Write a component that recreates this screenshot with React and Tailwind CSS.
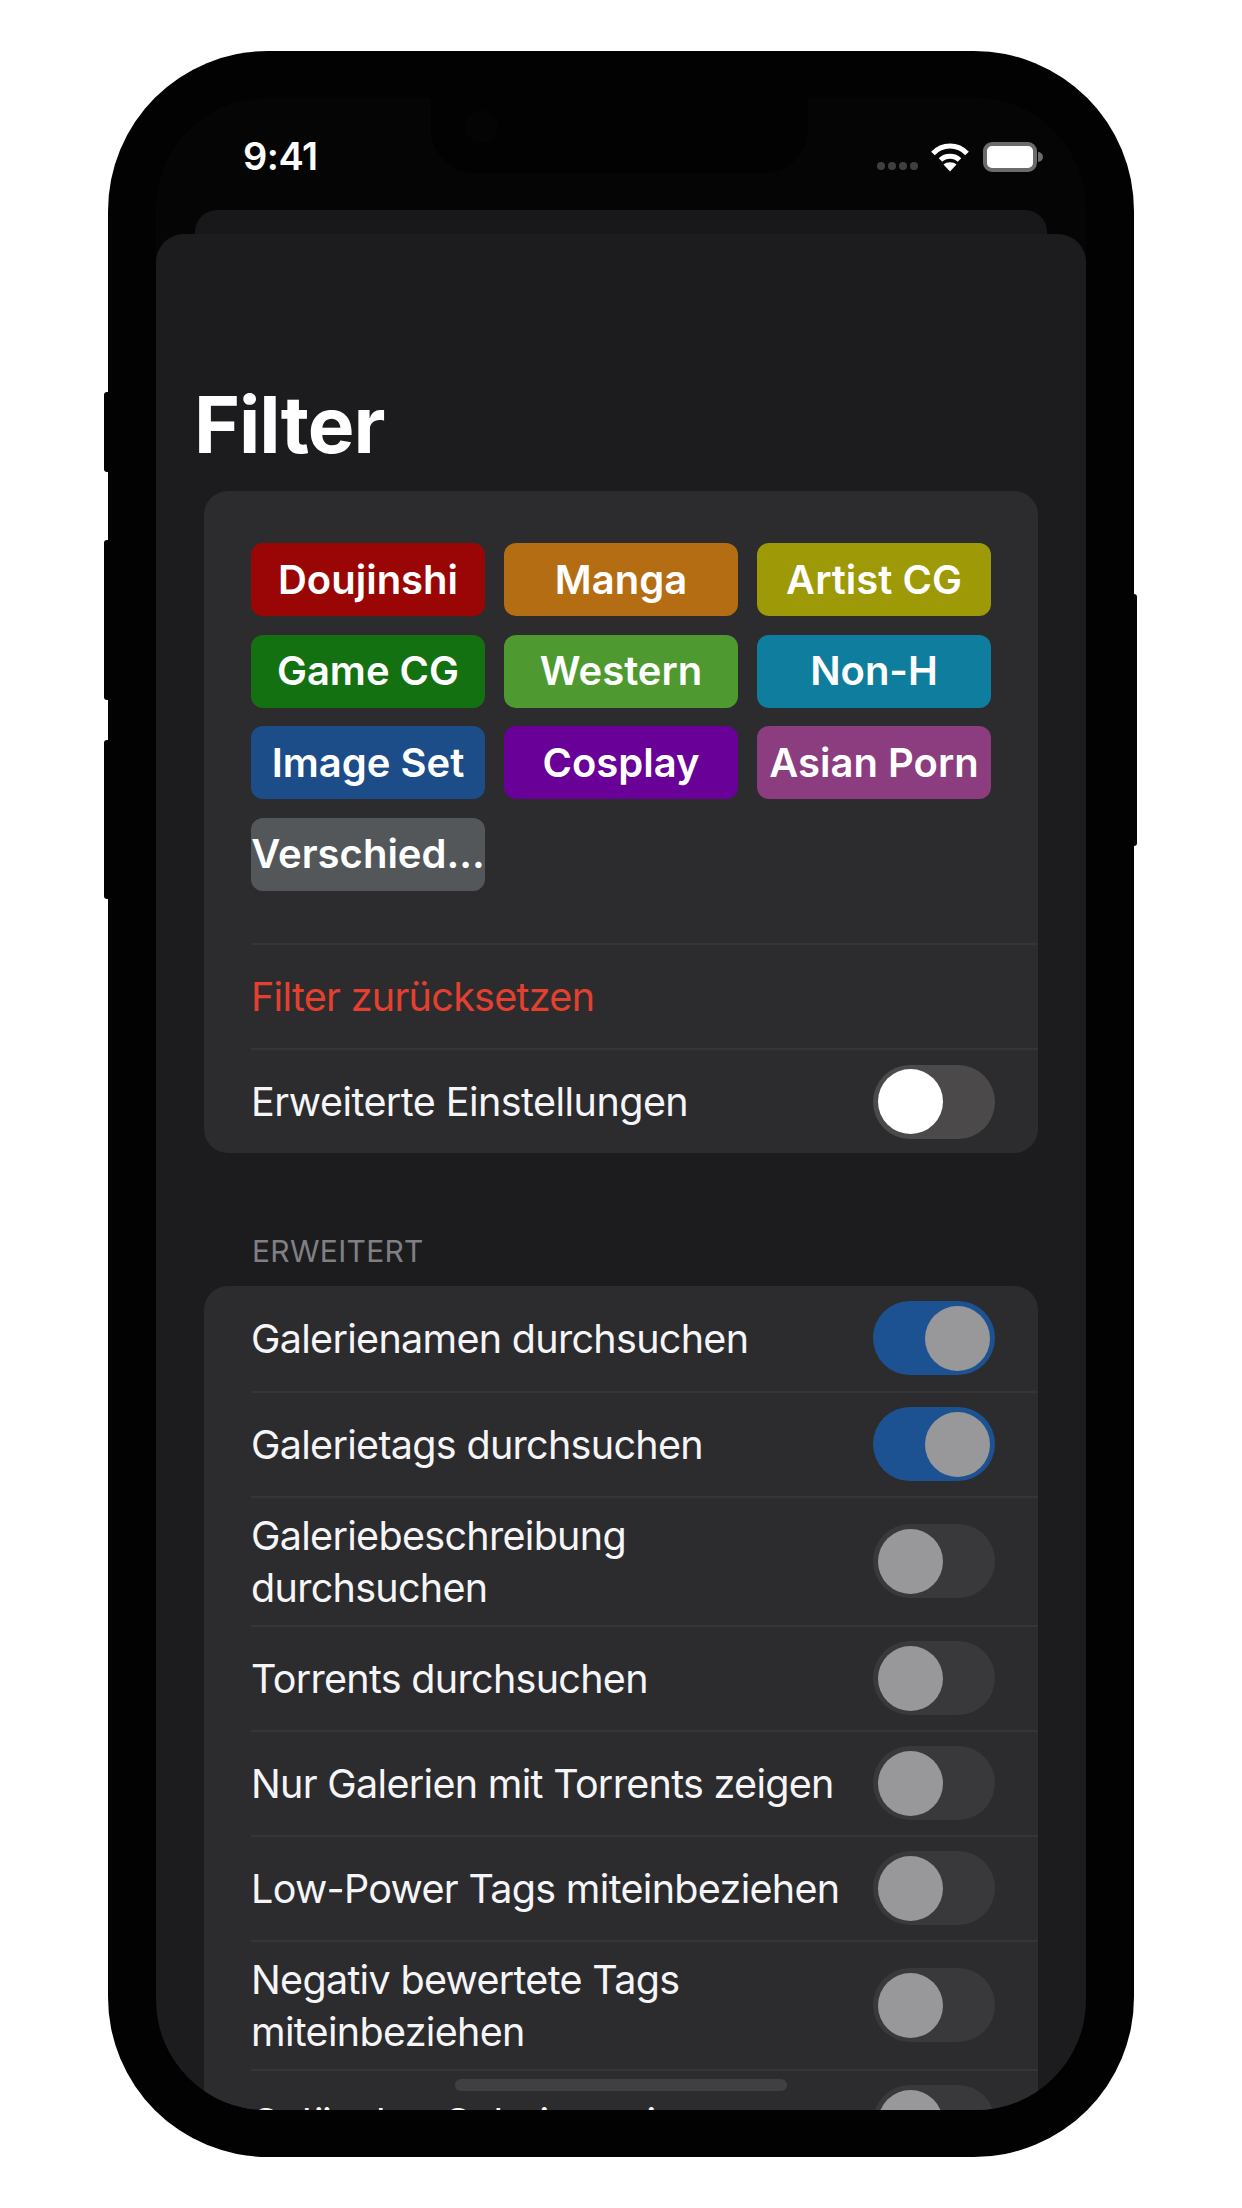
const categories = [
  { label: 'Doujinshi', color: 'bg-[#9a0606]' },
  { label: 'Manga', color: 'bg-[#b56d14]' },
  { label: 'Artist CG', color: 'bg-[#9e9907]' },
  { label: 'Game CG', color: 'bg-[#147112]' },
  { label: 'Western', color: 'bg-[#4e9a30]' },
  { label: 'Non-H', color: 'bg-[#0f7e9e]' },
  { label: 'Image Set', color: 'bg-[#1c4d89]' },
  { label: 'Cosplay', color: 'bg-[#690098]' },
  { label: 'Asian Porn', color: 'bg-[#8b3d80]' },
  { label: 'Verschied...', color: 'bg-[#54575a]' },
]

const advanced = [
  { label: 'Galerienamen durchsuchen', on: true },
  { label: 'Galerietags durchsuchen', on: true },
  { label: 'Galeriebeschreibung durchsuchen' },
  { label: 'Torrents durchsuchen' },
  { label: 'Nur Galerien mit Torrents zeigen' },
  { label: 'Low-Power Tags miteinbeziehen' },
  { label: 'Negativ bewertete Tags miteinbeziehen' },
  { label: 'Gelöschte Galerien zeigen' },
]

function Toggle({ on, bright }) {
  const track = on ? 'bg-[#1c5291] justify-end' : bright ? 'bg-[#4b4949]' : 'bg-[#39393b]'
  const thumb = bright ? 'bg-white' : 'bg-[#98989a]'
  return (
    <div className={`flex items-center w-[122px] h-[74px] shrink-0 rounded-full px-[5px] ${track}`}>
      <div className={`w-[65px] h-[65px] rounded-full ${thumb}`} />
    </div>
  )
}

function Row({ children, first }) {
  return (
    <div className="pl-[47px]">
      <div className={`flex items-center justify-between min-h-[105px] pr-[43px] ${first ? '' : 'border-t-2 border-[#353537]'}`}>
        {children}
      </div>
    </div>
  )
}

function StatusBar() {
  return (
    <div className="flex items-start justify-between h-[112px] shrink-0 pl-[87px] pr-[43px]">
      <span className="mt-[35px] text-[38px] leading-[46px] font-semibold text-white tracking-[-0.5px]">9:41</span>
      <div className="flex items-start mt-[44px]">
        <div className="flex gap-[3px] mt-[20px] mr-[12px]">
          <div className="w-[8px] h-[8px] rounded-full bg-[#3f3f3f]" />
          <div className="w-[8px] h-[8px] rounded-full bg-[#3f3f3f]" />
          <div className="w-[8px] h-[8px] rounded-full bg-[#3f3f3f]" />
          <div className="w-[8px] h-[8px] rounded-full bg-[#3f3f3f]" />
        </div>
        <svg width="40" height="30" viewBox="0 0 40 30" className="mr-[13px]">
          <path d="M3 11.5C12 1.5 28 1.5 37 11.5" fill="none" stroke="#fff" strokeWidth="5" />
          <path d="M10.5 18C15.5 13 24.5 13 29.5 18" fill="none" stroke="#fff" strokeWidth="5" />
          <path d="M20 29.5L13.5 22.5C17 19.5 23 19.5 26.5 22.5Z" fill="#fff" />
        </svg>
        <div className="flex items-center">
          <div className="w-[54px] h-[30px] rounded-[9px] border-[4px] border-[#6b6b6b] bg-white" />
          <div className="w-[5px] h-[10px] rounded-r-full bg-[#6b6b6b] ml-[1px]" />
        </div>
      </div>
    </div>
  )
}

export default function App() {
  return (
    <div className="w-[1242px] h-[2208px] bg-white pt-[51px] pl-[108px] overflow-hidden font-['Inter',sans-serif]">
      <div className="relative w-[1026px] h-[2106px] rounded-[160px] bg-[#020202] p-[47px_48px]">
        {/* side buttons */}
        <div className="absolute left-[-4px] top-[341px] w-[6px] h-[80px] rounded-l-[3px] bg-[#020202]" />
        <div className="absolute left-[-4px] top-[489px] w-[6px] h-[160px] rounded-l-[3px] bg-[#020202]" />
        <div className="absolute left-[-4px] top-[689px] w-[6px] h-[159px] rounded-l-[3px] bg-[#020202]" />
        <div className="absolute right-[-3px] top-[543px] w-[6px] h-[252px] rounded-r-[3px] bg-[#020202]" />

        <div className="relative flex flex-col w-[930px] h-[2012px] rounded-[110px] bg-[#050505] overflow-hidden">
          {/* notch */}
          <div className="absolute left-[275px] top-0 w-[377px] h-[75px] rounded-b-[44px] bg-[#020202] pl-[34px] pt-[12px]">
            <div className="w-[33px] h-[33px] rounded-full bg-[#040404]" />
          </div>

          <StatusBar />

          <div className="h-[24px] shrink-0 mx-[39px] rounded-t-[22px] bg-[#18181a]" />

          <div className="flex-1 rounded-t-[28px] bg-[#1c1c1e] px-[48px]">
            <h1 className="pt-[145px] -ml-[10px] text-[78.5px] leading-[92px] font-bold text-white tracking-[-1px]">Filter</h1>

            <div className="mt-[20px] rounded-[24px] bg-[#2c2c2e]">
              <div className="grid grid-cols-[234px_234px_234px] gap-x-[19px] gap-y-[18.5px] pl-[47px] pt-[52px] pb-[52.5px]">
                {categories.map(c => (
                  <div
                    key={c.label}
                    className={`flex items-center justify-center h-[73px] rounded-[12px] text-[40px] font-semibold text-white whitespace-nowrap overflow-hidden ${c.color}`}
                  >
                    {c.label}
                  </div>
                ))}
              </div>
              <Row>
                <span className="mt-[2px] text-[39.5px] text-[#e5402f] tracking-[-0.7px]">Filter zurücksetzen</span>
              </Row>
              <Row>
                <span className="mt-[2px] text-[39.5px] text-[#f5f5f7] tracking-[-0.55px]">Erweiterte Einstellungen</span>
                <Toggle bright />
              </Row>
            </div>

            <div className="mt-[76px] pl-[48px] text-[30px] leading-[44px] text-[#808084] tracking-[0.3px]">ERWEITERT</div>

            <div className="mt-[12.5px] rounded-[24px] bg-[#2c2c2e]">
              {advanced.map((item, i) => (
                <Row key={item.label} first={i === 0}>
                  <span className="w-[600px] mt-[1px] py-[11px] text-[39.5px] leading-[52px] text-[#f5f5f7] tracking-[-0.7px]">{item.label}</span>
                  <Toggle on={item.on} />
                </Row>
              ))}
            </div>
          </div>

          {/* home indicator */}
          <div className="absolute left-[299px] top-[1981px] w-[332px] h-[12px] rounded-full bg-[#404042]" />
        </div>
      </div>
    </div>
  )
}
